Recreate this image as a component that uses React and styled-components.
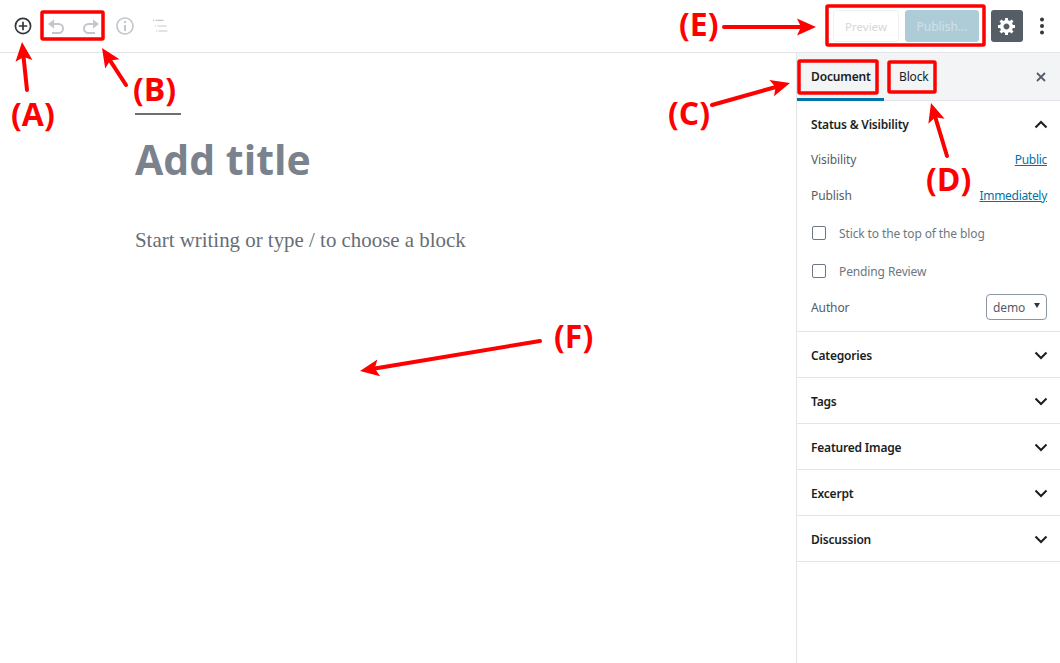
import styled, { createGlobalStyle } from "styled-components";

const GlobalStyle = createGlobalStyle`
  html, body {
    margin: 0;
    padding: 0;
    background: #fff;
  }
  body {
    font-family: "Noto Sans", "Open Sans", sans-serif;
  }
`;

const Page = styled.div`
  position: relative;
  width: 1060px;
  height: 663px;
  overflow: hidden;
  display: flex;
  flex-direction: column;
  background: #fff;
`;

const TopBar = styled.header`
  height: 52px;
  flex: none;
  display: flex;
  align-items: center;
  justify-content: space-between;
  border-bottom: 1px solid #e2e4e7;
`;

const ToolGroup = styled.div`
  display: flex;
  align-items: center;
`;

const LeftTools = styled(ToolGroup)`
  padding-left: 10px;
`;

const IconButton = styled.button`
  width: ${(p) => p.$w || 34}px;
  height: 32px;
  padding: 0;
  border: 0;
  background: none;
  display: flex;
  align-items: center;
  justify-content: center;
  color: ${(p) => p.$color || "#c3c7cb"};
`;

const PreviewButton = styled.button`
  width: 66px;
  height: 32px;
  margin-right: 6px;
  padding: 0;
  border: 1px solid #f0f1f2;
  border-radius: 3px;
  background: #fff;
  color: #d5d7d9;
  font: 400 11.5px "Noto Sans", sans-serif;
`;

const PublishButton = styled.button`
  width: 74px;
  height: 32px;
  margin-right: 12px;
  padding: 0;
  border: 1px solid #aeccd8;
  border-radius: 3px;
  background: #aeccd8;
  color: #cfe1e8;
  font: 400 12px "Noto Sans", sans-serif;
`;

const SettingsButton = styled.button`
  width: 32px;
  height: 32px;
  padding: 0;
  border: 0;
  border-radius: 3px;
  background: #555d66;
  color: #fff;
  display: flex;
  align-items: center;
  justify-content: center;
`;

const Main = styled.div`
  flex: 1;
  display: flex;
  min-height: 0;
`;

const Editor = styled.main`
  flex: 1;
  padding: 60px 0 0 135px;
`;

const TitleRule = styled.div`
  width: 46px;
  height: 2px;
  background: #6c7075;
`;

const Title = styled.h1`
  margin: 16px 0 0;
  font: 700 41px/56px "Open Sans", sans-serif;
  color: #7a838d;
`;

const Prompt = styled.p`
  margin: 39px 0 0;
  font: 400 20.9px/28px "Liberation Serif", serif;
  color: #666e76;
`;

const Sidebar = styled.aside`
  width: 263px;
  flex: none;
  border-left: 1px solid #e2e4e7;
`;

const Tabs = styled.div`
  height: 48px;
  display: flex;
  align-items: center;
  background: #f3f4f5;
  border-bottom: 1px solid #e2e4e7;
  box-sizing: border-box;
`;

const Tab = styled.div`
  height: 48px;
  width: ${(p) => (p.$active ? "87px" : "auto")};
  box-sizing: border-box;
  padding: 3px 0 0 ${(p) => (p.$active ? 14 : 15)}px;
  display: flex;
  align-items: center;
  font-size: 12px;
  letter-spacing: -0.15px;
  font-weight: ${(p) => (p.$active ? 600 : 400)};
  color: #191e23;
  border-bottom: 3px solid ${(p) => (p.$active ? "#0073aa" : "transparent")};
`;

const CloseButton = styled.div`
  margin-left: auto;
  margin-right: 13px;
  display: flex;
  color: #555d66;
`;

const StatusPanel = styled.section`
  height: 231px;
  box-sizing: border-box;
  border-bottom: 1px solid #e2e4e7;
  padding: 6px 12px 0 14px;
`;

const PanelHead = styled.div`
  height: ${(p) => p.$h || 45}px;
  display: flex;
  align-items: center;
  justify-content: space-between;
  font-size: 12px;
  font-weight: 600;
  letter-spacing: -0.2px;
  color: #191e23;
`;

const CollapsedPanel = styled.section`
  height: 46px;
  box-sizing: border-box;
  border-bottom: 1px solid #e2e4e7;
  padding: 1px 12px 0 14px;
`;

const Row = styled.div`
  height: ${(p) => p.$h || 36}px;
  display: flex;
  align-items: center;
  justify-content: space-between;
  padding-right: 1px;
  font-size: 12px;
  letter-spacing: -0.1px;
  color: #555d66;
`;

const Link = styled.a`
  color: #0073aa;
  text-decoration: underline;
  letter-spacing: -0.3px;
`;

const CheckList = styled.div`
  margin-top: 1px;
`;

const CheckRow = styled.label`
  height: 38px;
  display: flex;
  align-items: center;
  gap: 13px;
  padding-left: 1px;
  font-size: 12px;
  letter-spacing: -0.12px;
  color: #6c7781;
`;

const Check = styled.span`
  width: 12px;
  height: 12px;
  border: 1.5px solid #6c7781;
  border-radius: 2px;
  flex: none;
`;

const AuthorSelect = styled.div`
  width: 61px;
  height: 26px;
  box-sizing: border-box;
  border: 1px solid #8d96a0;
  border-radius: 4px;
  padding: 0 6px;
  display: flex;
  align-items: center;
  justify-content: space-between;
  color: #555d66;
  font-size: 12px;
`;

const Caret = styled.span`
  width: 0;
  height: 0;
  border-left: 3px solid transparent;
  border-right: 3px solid transparent;
  border-top: 5px solid #32373c;
  margin-top: -3px;
`;

const Overlay = styled.svg`
  position: absolute;
  inset: 0;
  pointer-events: none;
`;

const Callout = styled.span`
  position: absolute;
  left: ${(p) => p.$x}px;
  top: ${(p) => p.$y}px;
  font: 700 32px/36px "Open Sans", sans-serif;
  color: #f00;
  white-space: nowrap;
`;

const INFO = "M12 3.2c-4.8 0-8.8 3.9-8.8 8.8 0 4.8 3.9 8.8 8.8 8.8 4.8 0 8.8-3.9 8.8-8.8 0-4.8-4-8.8-8.8-8.8zm0 16c-4 0-7.2-3.3-7.2-7.2C4.8 8 8 4.8 12 4.8s7.2 3.3 7.2 7.2c0 4-3.2 7.2-7.2 7.2zM11 17h2v-6h-2v6zm0-8h2V7h-2v2z";
const COG = "M18 12h-2.18c-.17.7-.44 1.35-.81 1.93l1.54 1.54-2.1 2.1-1.54-1.54c-.58.36-1.23.63-1.91.79V19H8v-2.18c-.68-.16-1.33-.43-1.91-.79l-1.54 1.54-2.12-2.12 1.54-1.54c-.36-.58-.63-1.23-.79-1.91H1V9.03h2.17c.16-.7.44-1.35.8-1.94L2.43 5.55l2.1-2.1 1.54 1.54c.58-.37 1.24-.64 1.93-.81V2h3v2.18c.68.16 1.33.43 1.91.79l1.54-1.54 2.12 2.12-1.54 1.54c.36.59.64 1.24.8 1.94H18V12zm-8.5 1.5c1.66 0 3-1.34 3-3s-1.34-3-3-3-3 1.34-3 3 1.34 3 3 3z";

function Icon({ d, size = 24, box = 24 }) {
  return (
    <svg width={size} height={size} viewBox={`0 0 ${box} ${box}`} fill="currentColor">
      <path d={d} />
    </svg>
  );
}

function PlusCircle() {
  return (
    <svg width="18" height="18" viewBox="0 0 18 18" fill="none" stroke="currentColor" strokeWidth="1.7">
      <circle cx="9" cy="9" r="7.6" />
      <path d="M9 4.8v8.4M4.8 9h8.4" />
    </svg>
  );
}

function UndoIcon({ flip }) {
  return (
    <svg width="18" height="18" viewBox="0 0 18 18" transform={flip ? "scale(-1 1)" : undefined}>
      <path d="M6 7h5.5a4.5 4.5 0 0 1 0 9H5" fill="none" stroke="currentColor" strokeWidth="2" />
      <path d="M1 7l6-4.6v9.2z" fill="currentColor" />
    </svg>
  );
}

function ListIcon() {
  return (
    <svg width="18" height="18" viewBox="0 0 18 18" fill="currentColor">
      <path d="M2 2.800h1.200V4H2zM4.500 2.800h8V4h-8zM3.500 8.400h1.200v1.200H3.500zM6.500 8.400h9v1.200h-9zM5 13.400h1.200v1.200H5zM7.500 13.400h9v1.200h-9z" />
    </svg>
  );
}

function Chevron({ up }) {
  return (
    <svg width="14" height="9" viewBox="0 0 14 9" fill="none" stroke="#191e23" strokeWidth="2">
      <path d={up ? "M1.500 7.500l5.500-5.500 5.500 5.500" : "M1.500 1.500l5.500 5.500 5.500-5.500"} />
    </svg>
  );
}

function Arrow({ x1, y1, x2, y2 }) {
  // tail to tip, with a filled, slightly notched head
  const a = Math.atan2(y2 - y1, x2 - x1);
  const pt = (along, across) => [
    x2 + along * Math.cos(a) - across * Math.sin(a),
    y2 + along * Math.sin(a) + across * Math.cos(a),
  ];
  const head = [pt(0, 0), pt(-19, 8.5), pt(-15, 0), pt(-19, -8.5)].map((p) => p.join(",")).join(" ");
  const neck = pt(-12, 0);
  return (
    <g>
      <line x1={x1} y1={y1} x2={neck[0]} y2={neck[1]} stroke="#f00" strokeWidth="4" strokeLinecap="round" />
      <polygon points={head} fill="#f00" />
    </g>
  );
}

const collapsed = ["Categories", "Tags", "Featured Image", "Excerpt", "Discussion"];

export default function App() {
  return (
    <Page>
      <GlobalStyle />
      <TopBar>
        <LeftTools>
          <IconButton $w={25} $color="#32373c"><PlusCircle /></IconButton>
          <IconButton $w={41}><UndoIcon /></IconButton>
          <IconButton $w={30}><UndoIcon flip /></IconButton>
          <IconButton $w={38}><Icon d={INFO} /></IconButton>
          <IconButton $w={31}><ListIcon /></IconButton>
        </LeftTools>
        <ToolGroup>
          <PreviewButton>Preview</PreviewButton>
          <PublishButton>Publish...</PublishButton>
          <SettingsButton><Icon d={COG} size={20} box={20} /></SettingsButton>
          <IconButton $w={37} $color="#32373c">
            <svg width="4" height="18" viewBox="0 0 4 18" fill="currentColor">
              <circle cx="2" cy="2.5" r="2" />
              <circle cx="2" cy="9" r="2" />
              <circle cx="2" cy="15.5" r="2" />
            </svg>
          </IconButton>
        </ToolGroup>
      </TopBar>

      <Main>
        <Editor>
          <TitleRule />
          <Title>Add title</Title>
          <Prompt>Start writing or type / to choose a block</Prompt>
        </Editor>

        <Sidebar>
          <Tabs>
            <Tab $active>Document</Tab>
            <Tab>Block</Tab>
            <CloseButton>
              <svg width="12" height="12" viewBox="0 0 12 12" stroke="currentColor" strokeWidth="1.8">
                <path d="M2 2l8 8M10 2l-8 8" />
              </svg>
            </CloseButton>
          </Tabs>

          <StatusPanel>
            <PanelHead $h={34}>Status &amp; Visibility<Chevron up /></PanelHead>
            <Row>Visibility<Link>Public</Link></Row>
            <Row>Publish<Link>Immediately</Link></Row>
            <CheckList>
              <CheckRow><Check />Stick to the top of the blog</CheckRow>
              <CheckRow><Check />Pending Review</CheckRow>
            </CheckList>
            <Row $h={34}>Author<AuthorSelect>demo<Caret /></AuthorSelect></Row>
          </StatusPanel>

          {collapsed.map((name) => (
            <CollapsedPanel key={name}>
              <PanelHead>{name}<Chevron /></PanelHead>
            </CollapsedPanel>
          ))}
        </Sidebar>
      </Main>

      <Overlay width="1060" height="663" viewBox="0 0 1060 663" fill="none">
        <g stroke="#f00" strokeWidth="3.5">
          <rect x="42" y="12" width="61" height="27" rx="1" />
          <rect x="827" y="6" width="157" height="39" rx="1" />
          <rect x="799" y="61" width="78" height="32" rx="1" />
          <rect x="889" y="62" width="46" height="30" rx="1" />
        </g>
        <Arrow x1={27} y1={90} x2={22} y2={42} />
        <Arrow x1={126} y1={85} x2={102} y2={48} />
        <Arrow x1={712} y1={105} x2={790} y2={83} />
        <Arrow x1={947} y1={156} x2={931} y2={103} />
        <Arrow x1={724} y1={27} x2={816} y2={27} />
        <Arrow x1={540} y1={341} x2={360} y2={371} />
      </Overlay>

      <Callout $x={11} $y={96}>(A)</Callout>
      <Callout $x={133} $y={71}>(B)</Callout>
      <Callout $x={668} $y={95}>(C)</Callout>
      <Callout $x={926} $y={161}>(D)</Callout>
      <Callout $x={679} $y={6}>(E)</Callout>
      <Callout $x={554} $y={318}>(F)</Callout>
    </Page>
  );
}
